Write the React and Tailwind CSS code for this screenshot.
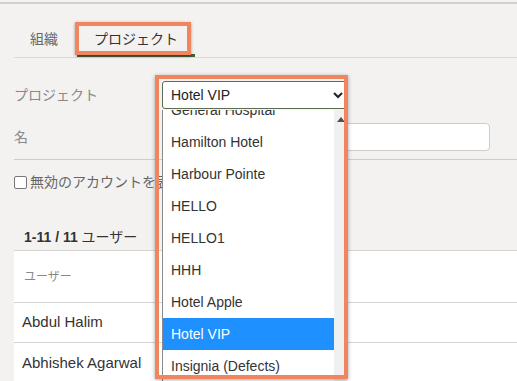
import React from "react";

const FONT = { fontFamily: '"Liberation Sans", Arial, "Noto Sans CJK JP", sans-serif' };

const projects = [
  "General Hospital",
  "Hamilton Hotel",
  "Harbour Pointe",
  "HELLO",
  "HELLO1",
  "HHH",
  "Hotel Apple",
  "Hotel VIP",
  "Insignia (Defects)",
];

// open select list, drawn over the form
const ProjectList = () => (
  <div className="absolute left-[162px] top-[110px] w-[185px] h-[271px] bg-white border-l border-[#8a8a8a] overflow-hidden flex">
    <div className="flex-1 overflow-hidden">
      <div className="-mt-[16px]">
        {projects.map((p) => (
          <div
            key={p}
            className={`h-[32px] flex items-center pl-[8px] text-[14px] ${
              p === "Hotel VIP" ? "bg-[#1e90ff] text-white" : "text-[#333]"
            }`}
          >
            {p}
          </div>
        ))}
      </div>
    </div>
    <div className="w-[13px] bg-[#f0f0f0] flex justify-center pt-[7px]">
      <svg width="8" height="5" viewBox="0 0 8 5">
        <path d="M0 5 L4 0 L8 5 Z" fill="#505050" />
      </svg>
    </div>
  </div>
);

export default function App() {
  return (
    <div className="relative w-[517px] h-[381px] overflow-hidden bg-[#f3f2f1] pt-[2px]" style={FONT}>
      <div className="border-t-2 border-[#d3d0cc]" />

      {/* Tabs */}
      <div className="ml-[14px] mt-[19px] h-[35px] flex items-end border-b border-[#dedbd7] text-[14px]">
        <div className="px-[16px] pb-[7px] text-[#666]">組織</div>
        <div className="ml-[3px] px-[17px] pb-[4px] text-[#333] border-b-[3px] border-[#4b5e3a]">
          プロジェクト
        </div>
      </div>

      {/* Form */}
      <div className="ml-[14px] text-[14px] text-[#888]">
        <div className="flex items-center mt-[23px] h-[28px]">
          <div className="w-[148px]">プロジェクト</div>
          <div className="w-[186px] h-[28px] border border-[#5d6e4e] rounded-[3px] bg-white flex items-center justify-between pl-[8px] pr-[4px] text-[14px] text-[#222]">
            <span>Hotel VIP</span>
            <svg width="10" height="7" viewBox="0 0 10 7">
              <path d="M1 1 L5 5 L9 1" stroke="#222" strokeWidth="2" fill="none" />
            </svg>
          </div>
        </div>
        <div className="flex items-center mt-[14px] h-[28px]">
          <div className="w-[148px]">名</div>
          <div className="w-[328px] h-[28px] border border-[#cfcccc] rounded-[4px] bg-white" />
        </div>
        <div className="mt-[8px] border-t border-[#cfcccc]" />
        <label className="flex items-center gap-[3px] mt-[12px] text-[#666]">
          <span className="w-[13px] h-[13px] border border-[#777] rounded-[2px] bg-white" />
          <span>無効のアカウントを表示</span>
        </label>
      </div>

      {/* Users */}
      <div className="ml-[24px] mt-[34px] text-[14px] text-[#333]">
        <span className="font-bold">1-11 / 11</span> ユーザー
      </div>
      <div className="ml-[14px] mt-[2px] bg-white border-t border-[#d6d4d2] text-[14px]">
        <div className="h-[52px] flex items-center pl-[10px] text-[12px] text-[#888] border-b border-[#d6d4d2]">
          ユーザー
        </div>
        <div className="h-[40px] flex items-center pl-[8px] text-[15px] text-[#333] border-b border-[#d6d4d2]">
          Abdul Halim
        </div>
        <div className="h-[41px] flex items-center pl-[8px] text-[15px] text-[#333]">Abhishek Agarwal</div>
      </div>

      <ProjectList />

      {/* annotation boxes */}
      <div className="absolute left-[75px] top-[22px] w-[116px] h-[33px] border-[4px] border-[#ef8660] shadow-[0_1px_3px_rgba(0,0,0,0.35)]" />
      <div className="absolute left-[155px] top-[75px] w-[193px] h-[304px] border-[4px] border-[#ef8660] shadow-[0_1px_4px_rgba(0,0,0,0.35)]" />
    </div>
  );
}
